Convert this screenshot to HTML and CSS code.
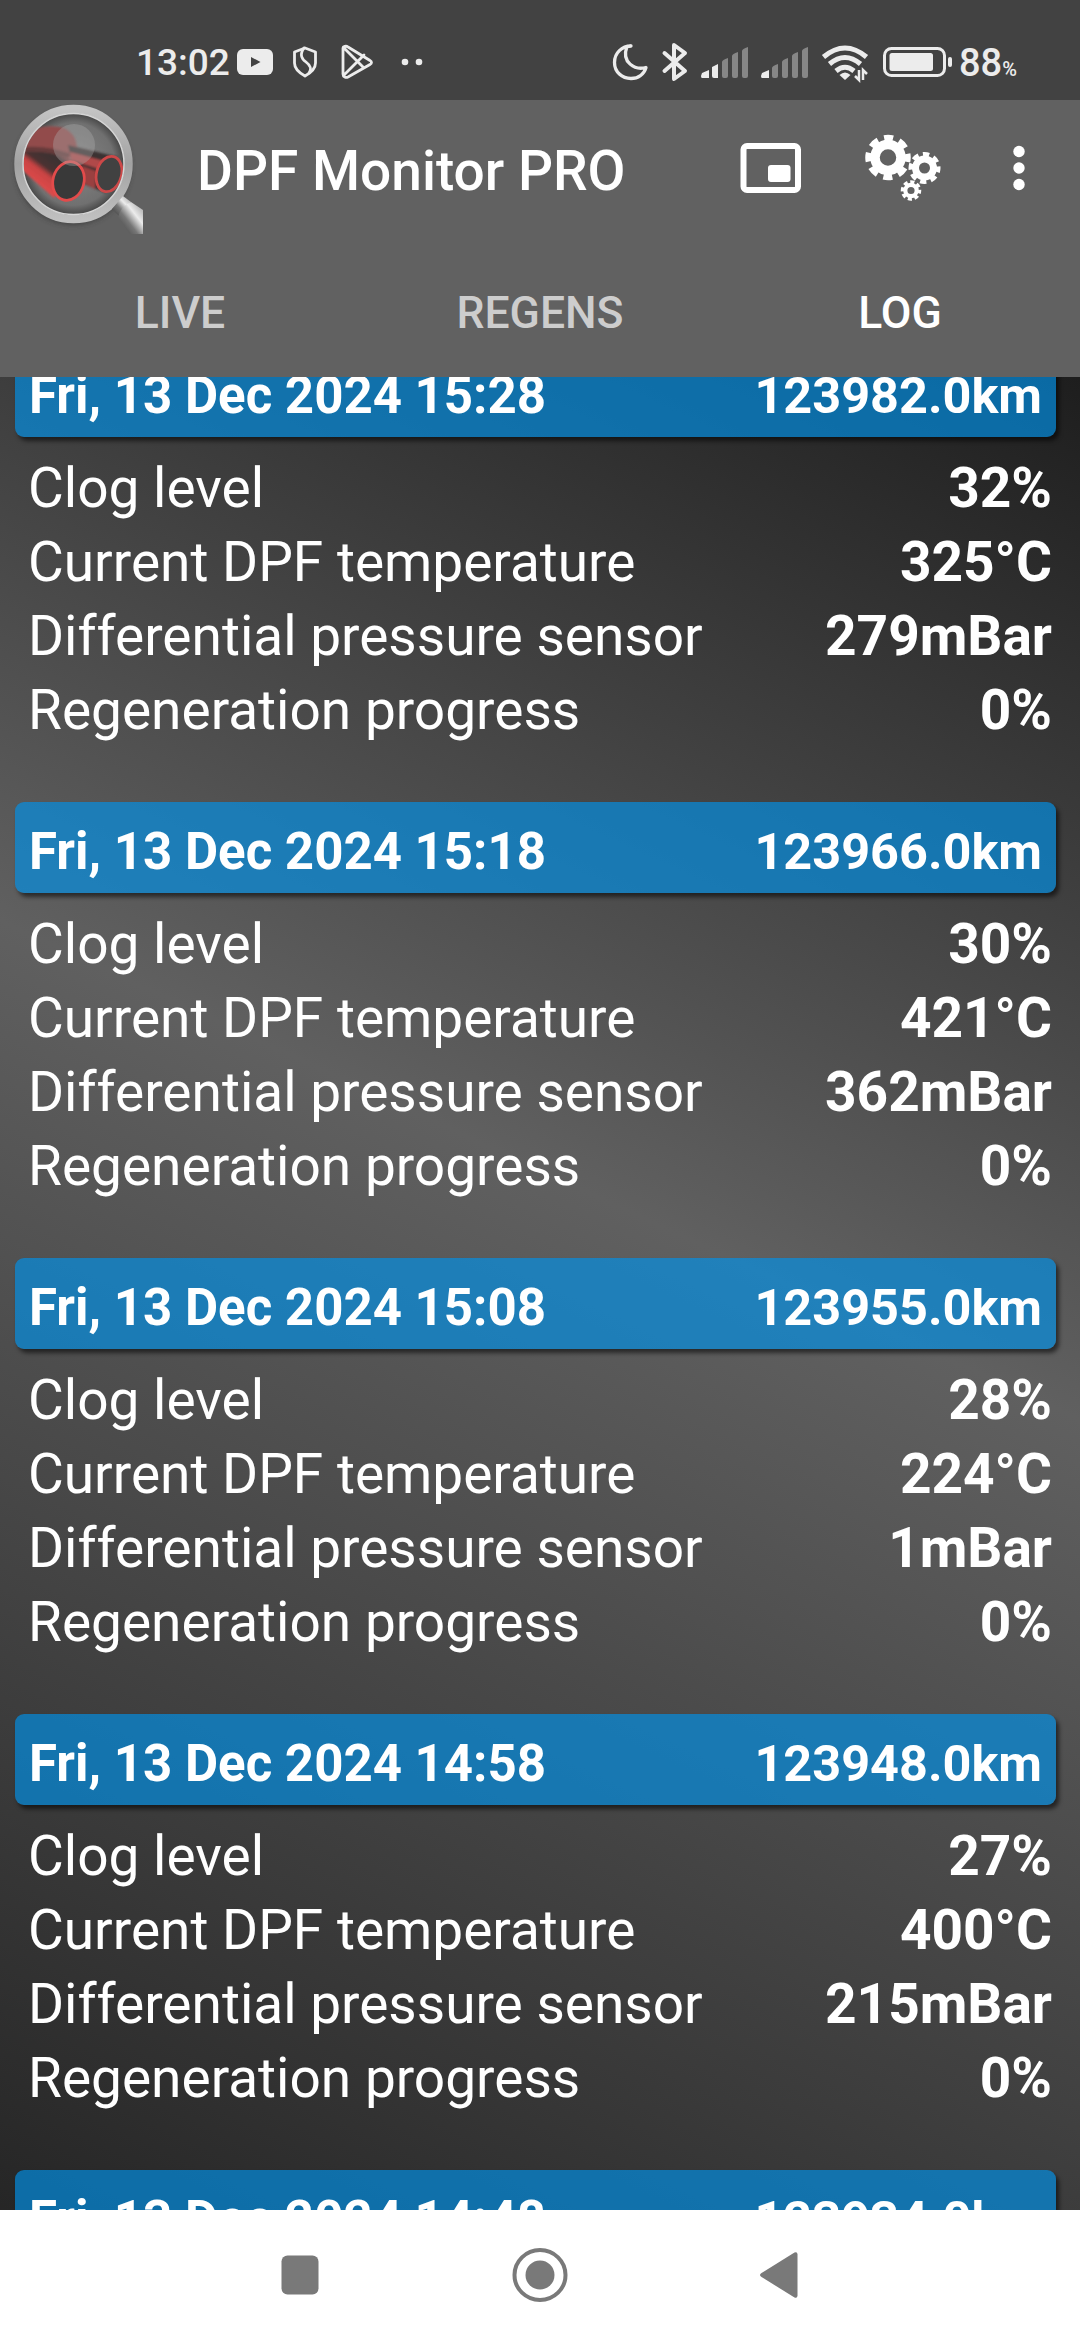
FILE: index.html
```html
<!DOCTYPE html>
<html lang="en">
<head>
<meta charset="utf-8">
<title>DPF Monitor PRO</title>
<link rel="stylesheet" href="styles.css">
</head>
<body>
<div class="screen">
  <header class="statusbar">
    <span class="clock">13:02</span>
    <svg class="notifications" width="190" height="70" viewBox="0 0 190 70">
      <rect x="1" y="19" width="36" height="26" rx="6" fill="#ececec"/>
      <path d="M15 27l9.500 5-9.500 5z" fill="#424242"/>
      <g fill="none" stroke="#ececec" stroke-width="2.800" stroke-linejoin="round" stroke-linecap="round">
        <path d="M69 18l10.500 4v11c0 6-5 10-10.500 13-5.500-3-10.500-7-10.500-13V22z"/>
        <path d="M68 18c-5 7-2 11 2 14s6 7 3 11"/>
        <path d="M107 18v26c0 3 3 4 5 3l22-12.500c2-1 2-3 0-4L112 17c-2-1.500-5-.500-5 1zM108 18l20 20M108 45l20-20"/>
      </g>
      <circle cx="169" cy="32" r="3.300" fill="#ececec"/><circle cx="183" cy="32" r="3.300" fill="#ececec"/>
    </svg>
    <svg class="indicators" width="354" height="70" viewBox="600 30 354 70">
      <g fill="none" stroke="#ececec" stroke-linejoin="round" stroke-linecap="round">
        <path stroke-width="3.300" d="M631 46c-9 0-16.500 7-16.500 16.500S622 78.500 631 78.500c7 0 13-4 15-11-11 3-25-5-19-21z"/>
        <path stroke-width="4" d="M664.500 53l20.500 18-11 8V45l11 8-20.500 18"/>
      </g>
      <g fill="#ececec">
        <path d="M701 76l1-3 7-3v8h-7q-1 0-1-2zM712 67l6-3v14h-4q-2 0-2-2zM761 76l1-3 7-3v8h-7q-1 0-1-2z"/>
      </g>
      <g fill="#868686">
        <path d="M722 62q0-2 6-4v18q0 2-2 2h-2q-2 0-2-2zM732 56q0-2 6-4v24q0 2-2 2h-2q-2 0-2-2zM742 51q0-2 6-4v29q0 2-2 2h-2q-2 0-2-2zM772 68q0-2 6-4v12q0 2-2 2h-2q-2 0-2-2zM782 62q0-2 6-4v18q0 2-2 2h-2q-2 0-2-2zM792 56q0-2 6-4v24q0 2-2 2h-2q-2 0-2-2zM802 51q0-2 6-4v29q0 2-2 2h-2q-2 0-2-2z"/>
      </g>
      <g fill="none" stroke="#ececec" stroke-width="5">
        <path d="M823.500 57q21.500-18 43 0M829.500 64q15.500-13 31 0M836 71q9-7.500 18 0"/>
      </g>
      <path d="M839.500 75q5.500-5 11 0l-5.500 5z" fill="#ececec"/>
      <path d="M859 70v10l-4-4M863 80V70l4 4" fill="none" stroke="#ececec" stroke-width="2.500"/>
      <rect x="884.500" y="48.500" width="60" height="27" rx="7" fill="none" stroke="#ececec" stroke-width="3"/>
      <rect x="889.500" y="53" width="43.500" height="18" rx="2.500" fill="#ececec"/>
      <rect x="948" y="57" width="4" height="10" rx="2" fill="#ececec"/>
    </svg>
    <span class="battery">88<small>%</small></span>
  </header>

  <div class="appbar">
    <svg class="logo" width="160" height="146" viewBox="0 0 160 146">
      <defs>
        <linearGradient id="ring" x1="0" y1="0" x2="0" y2="1"><stop offset="0" stop-color="#c4c4c4"/><stop offset=".5" stop-color="#a2a2a2"/><stop offset="1" stop-color="#c0c0c0"/></linearGradient>
        <radialGradient id="glass"><stop offset="0" stop-color="#858585"/><stop offset=".75" stop-color="#707070"/><stop offset="1" stop-color="#343434"/></radialGradient>
        <linearGradient id="pipe" gradientUnits="userSpaceOnUse" x1="38" y1="86" x2="62" y2="54"><stop offset="0" stop-color="#e04a4a"/><stop offset=".35" stop-color="#c84343"/><stop offset=".5" stop-color="#4a3232"/><stop offset=".85" stop-color="#3a3131"/><stop offset="1" stop-color="#8a4444"/></linearGradient>
        <linearGradient id="handle" x1="0" y1="1" x2="1" y2="0"><stop offset="0" stop-color="#383838"/><stop offset=".4" stop-color="#777"/><stop offset=".65" stop-color="#ececec"/><stop offset="1" stop-color="#999"/></linearGradient>
        <clipPath id="lens"><circle cx="73.500" cy="64" r="50"/></clipPath>
        <filter id="soft"><feGaussianBlur stdDeviation="2.500"/></filter>
        <filter id="blend"><feGaussianBlur stdDeviation="1"/></filter>
      </defs>
      <circle cx="73" cy="67" r="58" fill="#303030" opacity=".6" filter="url(#soft)"/>
      <circle cx="73.500" cy="64" r="55" fill="url(#glass)" stroke="url(#ring)" stroke-width="8.500"/>
      <g clip-path="url(#lens)">
        <g filter="url(#blend)">
          <path d="M22 36q20-14 42-8 13 6 13 22L66 62 24 54z" fill="#924c4c"/>
          <path d="M25 47q22-2 46 7L60 66 25 58z" fill="#663a3a"/>
          <path d="M68 45l50 12-12 36-30-12z" fill="#3a3131"/>
          <path d="M70 52l34 9-5 8-28-9z" fill="#b04848"/>
          <path d="M82 66l14 5-1 18-12-6z" fill="#9a4040"/>
          <path d="M22 52q28-2 54 9L54 98 22 70z" fill="url(#pipe)"/>
        </g>
        <ellipse cx="68.500" cy="81" rx="15.500" ry="19.500" transform="rotate(15 68.500 81)" fill="#393939" stroke="#e24b4b" stroke-width="2.800"/>
        <ellipse cx="109" cy="74" rx="12.500" ry="18" transform="rotate(15 109 74)" fill="#414141" stroke="#cc4848" stroke-width="2.800"/>
      </g>
      <circle cx="73.500" cy="64" r="50.500" fill="none" stroke="#d6d6d6" stroke-width="1.500"/>
      <circle cx="74" cy="45" r="21" fill="#b0b0b0" opacity=".36"/>
      <path d="M112 109l11-13 8 6-12 14z" fill="url(#handle)"/>
      <path d="M118 117q3-11 13-15l12 8v24H130z" fill="url(#handle)"/>
    </svg>
    <h1>DPF Monitor PRO</h1>
    <svg class="actions" width="360" height="120" viewBox="0 0 360 120">
      <rect x="23.500" y="26" width="54.500" height="44" rx="3.500" fill="none" stroke="#fff" stroke-width="6"/>
      <rect x="48" y="45" width="22.500" height="17" rx="3" fill="#fff"/>
      <g fill="none" stroke="#fff">
        <circle cx="168" cy="37.500" r="13" stroke-width="9.500"/>
        <circle cx="168" cy="37.500" r="19.500" stroke-width="6.500" stroke-dasharray="9 6.315" stroke-dashoffset="4.500"/>
        <circle cx="204.500" cy="48" r="9" stroke-width="7"/>
        <circle cx="204.500" cy="48" r="13.500" stroke-width="5" stroke-dasharray="6.200 4.403" stroke-dashoffset="2"/>
        <circle cx="191" cy="70.500" r="5.700" stroke-width="4.200"/>
        <circle cx="191" cy="70.500" r="8.500" stroke-width="3.500" stroke-dasharray="4 2.676" stroke-dashoffset="1"/>
      </g>
      <g fill="#fff"><circle cx="299" cy="31.500" r="5.700"/><circle cx="299" cy="48" r="5.700"/><circle cx="299" cy="64.500" r="5.700"/></g>
    </svg>
  </div>

  <nav class="tabs"><span>LIVE</span><span>REGENS</span><span class="active">LOG</span></nav>

  <main class="log">
    <section class="entry">
      <h2><span>Fri, 13 Dec 2024 15:28</span><span class="odometer">123982.0km</span></h2>
      <dl><dt>Clog level</dt><dd>32%</dd><dt>Current DPF temperature</dt><dd>325°C</dd><dt>Differential pressure sensor</dt><dd>279mBar</dd><dt>Regeneration progress</dt><dd>0%</dd></dl>
    </section>
    <section class="entry">
      <h2><span>Fri, 13 Dec 2024 15:18</span><span class="odometer">123966.0km</span></h2>
      <dl><dt>Clog level</dt><dd>30%</dd><dt>Current DPF temperature</dt><dd>421°C</dd><dt>Differential pressure sensor</dt><dd>362mBar</dd><dt>Regeneration progress</dt><dd>0%</dd></dl>
    </section>
    <section class="entry">
      <h2><span>Fri, 13 Dec 2024 15:08</span><span class="odometer">123955.0km</span></h2>
      <dl><dt>Clog level</dt><dd>28%</dd><dt>Current DPF temperature</dt><dd>224°C</dd><dt>Differential pressure sensor</dt><dd>1mBar</dd><dt>Regeneration progress</dt><dd>0%</dd></dl>
    </section>
    <section class="entry">
      <h2><span>Fri, 13 Dec 2024 14:58</span><span class="odometer">123948.0km</span></h2>
      <dl><dt>Clog level</dt><dd>27%</dd><dt>Current DPF temperature</dt><dd>400°C</dd><dt>Differential pressure sensor</dt><dd>215mBar</dd><dt>Regeneration progress</dt><dd>0%</dd></dl>
    </section>
    <section class="entry">
      <h2><span>Fri, 13 Dec 2024 14:48</span><span class="odometer">123934.0km</span></h2>
    </section>
  </main>

  <footer class="navbar">
    <svg width="60" height="60" viewBox="0 0 60 60"><rect x="11.500" y="10.500" width="37" height="39" rx="6" fill="#797979"/></svg>
    <svg width="60" height="60" viewBox="0 0 60 60"><ellipse cx="30" cy="30" rx="25.500" ry="25" fill="none" stroke="#797979" stroke-width="4"/><circle cx="30" cy="30" r="14.500" fill="#797979"/></svg>
    <svg width="60" height="60" viewBox="0 0 60 60"><path d="M11.500 28L44.500 7.500q3-1 3 2v41q0 3-3 2L11.500 32q-3-2 0-4z" fill="#797979"/></svg>
  </footer>
</div>
</body>
</html>
```

FILE: styles.css
```css
* { box-sizing: border-box; margin: 0; padding: 0; }

body {
  background: #fff;
  color: #fff;
  font-family: Roboto, "Noto Sans", sans-serif;
}

svg { display: block; flex: none; }

.screen {
  display: flex;
  flex-direction: column;
  width: 1080px;
  height: 2340px;
  overflow: hidden;
  background: linear-gradient(24.8deg, #202020, #606060 50%, #060606);
}

.statusbar {
  display: flex;
  flex: none;
  height: 100px;
  padding-left: 136px;
  background: #424242;
  color: #ececec;
  font-weight: 500;
}
.clock { width: 100px; font-size: 37px; line-height: 126px; white-space: nowrap; }
.notifications { margin-top: 30px; }
.indicators { margin: 30px 0 0 174px; }
.battery { margin-left: 5px; font-size: 38px; line-height: 126px; }
.battery small { font-size: 20px; }

.appbar {
  display: flex;
  flex: none;
  height: 146px;
  background: #616161;
}
.appbar h1 {
  width: 523px;
  margin-left: 37px;
  font-size: 55px;
  font-weight: 500;
  line-height: 143px;
  white-space: nowrap;
}
.actions { margin-top: 20px; }

.tabs {
  display: grid;
  flex: none;
  grid-template-columns: repeat(3, 1fr);
  height: 131px;
  background: #616161;
  color: #cdcdcd;
  font-size: 44.5px;
  font-weight: 500;
  line-height: 134px;
  text-align: center;
}
.tabs .active { color: #fff; }

.log {
  display: flex;
  flex: 1;
  flex-direction: column;
  justify-content: flex-start;
  min-height: 0;
  overflow: hidden;
}
.entry { flex: none; height: 456px; }
.entry:first-child { margin-top: -31px; }
.entry h2 {
  display: flex;
  justify-content: space-between;
  height: 91px;
  margin: 0 24px 0 15px;
  padding: 0 14px;
  border-radius: 9px;
  background: rgba(0, 145, 234, .66);
  box-shadow: 3px 4px 4px rgba(0, 0, 0, .55);
  font-size: 51px;
  font-weight: 700;
  line-height: 100px;
}
.entry .odometer { font-size: 50.4px; }
.entry dl {
  display: grid;
  grid-template-columns: 1fr auto;
  padding: 14px 28px 0 28px;
  font-size: 55px;
  line-height: 74px;
}
.entry dd { font-weight: 700; text-align: right; }

.navbar {
  display: grid;
  flex: none;
  grid-template-columns: repeat(3, 240px);
  place-content: center;
  place-items: center;
  height: 130px;
  background: #fff;
}
```
